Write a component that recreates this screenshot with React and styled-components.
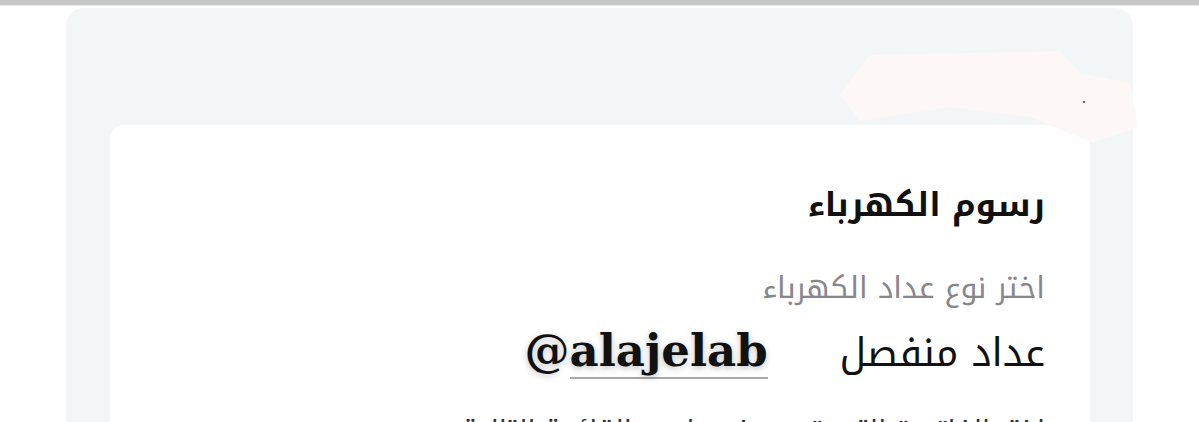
import React from 'react'
import styled, { createGlobalStyle } from 'styled-components'

const GlobalStyle = createGlobalStyle`
	html, body {
		margin: 0;
		padding: 0;
		background: #ffffff;
		overflow: hidden;
	}
`

const Page = styled.div`
	position: relative;
	width: 1199px;
	height: 422px;
	overflow: hidden;
	background: #ffffff;
`

const TopBar = styled.div`
	height: 5px;
	background: #c6c6c6;
	border-bottom: 1px solid #e4e4e4;
`

const Panel = styled.div`
	margin: 2px 66px 0 66px;
	padding: 117px 43px 0 44px;
	background: #f3f6f7;
	border-radius: 18px 18px 0 0;
	height: 400px;
`

const Card = styled.section`
	background: #ffffff;
	border-radius: 14px;
	padding: 58px 45px 0 45px;
	height: 400px;
	direction: rtl;
	text-align: right;
	font-family: "Noto Kufi Arabic", "Noto Sans Arabic", "DejaVu Sans", sans-serif;
`

const Title = styled.h2`
	margin: 0;
	font-size: 33px;
	font-weight: 700;
	color: #111111;
	line-height: 44px;
`

const Hint = styled.p`
	margin: 41px 0 0 0;
	font-size: 30px;
	color: #86868c;
	line-height: 40px;
`

const Row = styled.div`
	display: flex;
	align-items: center;
	gap: 72px;
	margin-top: 19px;
`

const Value = styled.div`
	font-size: 39px;
	color: #111111;
	line-height: 52px;
`

const Handle = styled.div`
	direction: ltr;
	font-family: "DejaVu Serif", "Liberation Serif", serif;
	font-weight: 700;
	font-size: 45px;
	color: #111111;
	line-height: 48px;
	text-shadow: 0 2px 6px rgba(0, 0, 0, 0.25);
`

const Underlined = styled.span`
	display: inline-block;
	border-bottom: 2px solid #a9a9a9;
	padding-bottom: 2px;
`

const Note = styled.p`
	margin: 32px 0 0 0;
	font-size: 28px;
	color: #333333;
	line-height: 40px;
	white-space: nowrap;
`

const Smudge = styled.svg`
	position: absolute;
	left: 830px;
	top: 45px;
	width: 320px;
	height: 100px;
	pointer-events: none;
`

export default function App() {
	return (
		<Page>
			<GlobalStyle />
			<TopBar />
			<Panel>
				<Card>
					<Title>رسوم الكهرباء</Title>
					<Hint>اختر نوع عداد الكهرباء</Hint>
					<Row>
						<Value>عداد منفصل</Value>
						<Handle>@<Underlined>alajelab</Underlined></Handle>
					</Row>
					<Note>اختر الفاتورة التي تريد دفعها من القائمة التالية</Note>
				</Card>
			</Panel>
			<Smudge viewBox="0 0 320 100">
				<path d="M40 10 L230 6 L250 28 L300 38 L308 82 L262 98 L200 72 L120 62 L30 76 L10 50 Z" fill="#fdf7f8" />
				<circle cx="254" cy="57" r="1" fill="#333" />
			</Smudge>
		</Page>
	)
}
